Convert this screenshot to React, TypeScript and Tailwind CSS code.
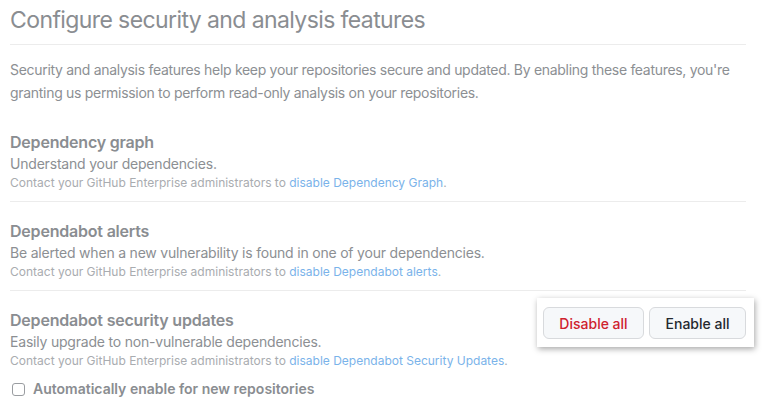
import React from 'react'

const FONT = { fontFamily: 'Inter, "Liberation Sans", sans-serif' }

type Feature = {
  title: string
  desc: string
  link: string
}

const FEATURES: Feature[] = [
  {
    title: 'Dependency graph',
    desc: 'Understand your dependencies.',
    link: 'disable Dependency Graph',
  },
  {
    title: 'Dependabot alerts',
    desc: 'Be alerted when a new vulnerability is found in one of your dependencies.',
    link: 'disable Dependabot alerts',
  },
]

function Heading({ children }: { children: React.ReactNode }) {
  return (
    <h3 className="text-[16px] leading-[24px] font-semibold tracking-[-0.2px] text-[#8a8d91]">{children}</h3>
  )
}

function Desc({ children }: { children: React.ReactNode }) {
  return <p className="text-[14px] leading-[20px] tracking-[-0.2px] text-[#8c8f93]">{children}</p>
}

function Contact({ link }: { link: string }) {
  return (
    <p className="text-[12px] leading-[18px] text-[#a9acb0]">
      Contact your GitHub Enterprise administrators to{' '}
      <a className="text-[#7ab3ea]">{link}</a>.
    </p>
  )
}

export default function App() {
  return (
    <div className="w-[766px] h-[404px] bg-white overflow-hidden pl-[10px] pr-[20px]" style={FONT}>
      {/* Header */}
      <h2 className="pt-[6px] pb-[10px] text-[23px] leading-[28px] font-normal tracking-[-0.6px] text-[#8a8d91] border-b border-[#ececec]">
        Configure security and analysis features
      </h2>

      <p className="mt-[13px] text-[14px] leading-[23px] tracking-[-0.3px] text-[#8c8f93]">
        Security and analysis features help keep your repositories secure and updated. By enabling these features, you're granting us permission to perform read-only analysis on your repositories.
      </p>

      {/* Features */}
      <div className="mt-[26px]">
        {FEATURES.map((f) => (
          <div key={f.title} className="border-b border-[#ececec] pb-[9px] mb-[17px]">
            <Heading>{f.title}</Heading>
            <Desc>{f.desc}</Desc>
            <Contact link={f.link} />
          </div>
        ))}

        <div className="flex items-start justify-between">
          <div>
            <Heading>Dependabot security updates</Heading>
            <Desc>Easily upgrade to non-vulnerable dependencies.</Desc>
            <Contact link="disable Dependabot Security Updates" />
            <label className="mt-[10px] flex items-center gap-[8px]">
              <span className="ml-[2px] w-[13px] h-[13px] rounded-[3px] border border-[#9a9da1] bg-white" />
              <span className="text-[14px] leading-[18px] font-semibold text-[#8a8d91]">
                Automatically enable for new repositories
              </span>
            </label>
          </div>

          {/* Highlighted buttons */}
          <div className="-mt-[10px] -mr-[8px] flex gap-[5px] bg-white pl-[6px] pr-[8px] pt-[9px] pb-[8px] shadow-[1px_2px_6px_rgba(0,0,0,0.35)]">
            <button className="w-[101px] h-[32px] rounded-[6px] border border-[#d8dadd] bg-[#f6f8fa] text-[14px] font-medium text-[#cf222e]">
              Disable all
            </button>
            <button className="w-[97px] h-[32px] rounded-[6px] border border-[#d8dadd] bg-[#f6f8fa] text-[14px] font-medium text-[#24292f]">
              Enable all
            </button>
          </div>
        </div>
      </div>
    </div>
  )
}
